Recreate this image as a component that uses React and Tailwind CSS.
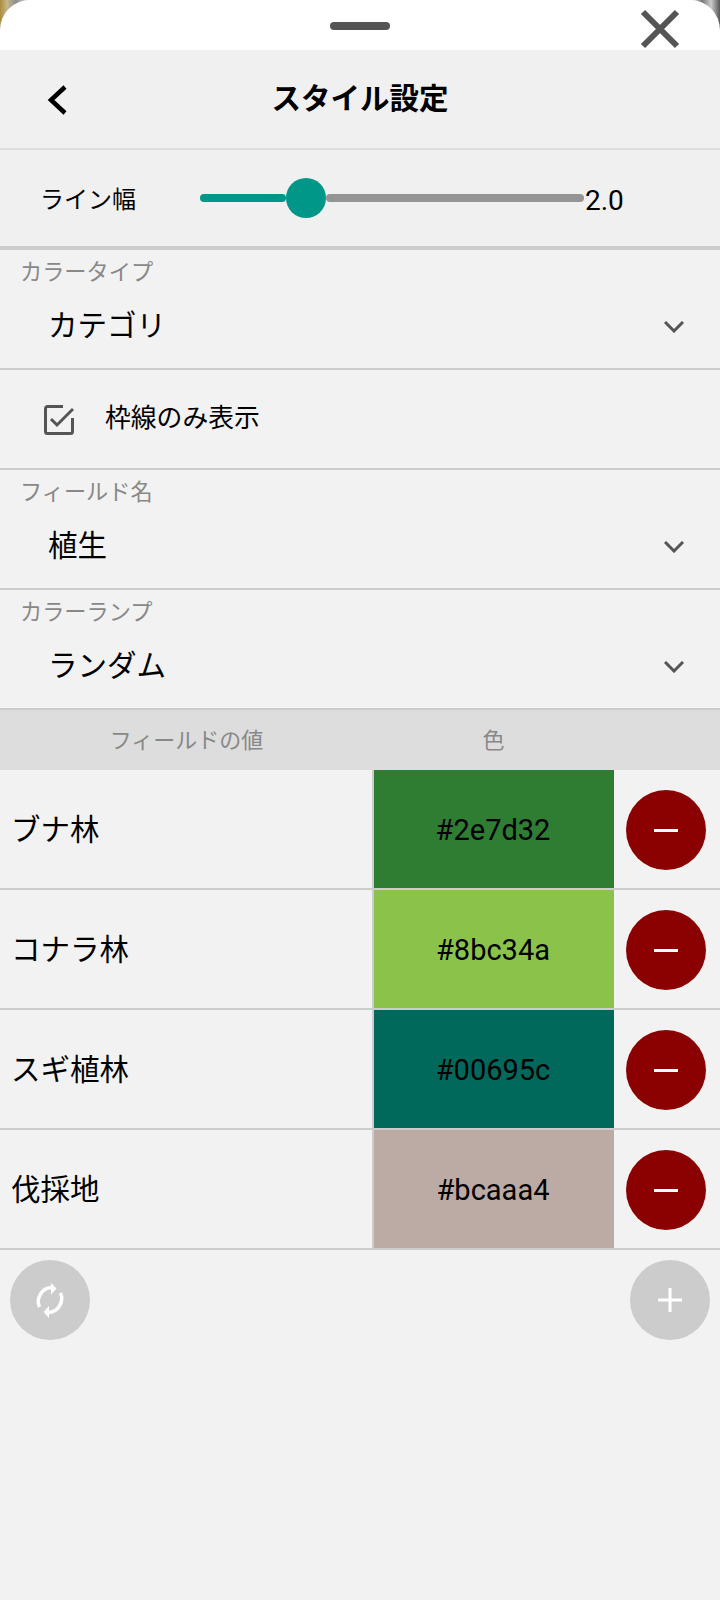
import React from "react";

const rows = [
  { name: "ブナ林", color: "#2e7d32", swatch: "bg-[#2e7d32]" },
  { name: "コナラ林", color: "#8bc34a", swatch: "bg-[#8bc34a]" },
  { name: "スギ植林", color: "#00695c", swatch: "bg-[#00695c]" },
  { name: "伐採地", color: "#bcaaa4", swatch: "bg-[#bcaaa4]" },
];

const ChevronDown = () => (
  <svg width="20" height="12" viewBox="0 0 20 12" fill="none" stroke="#555" strokeWidth="3">
    <path d="M1 1 L10 10 L19 1" />
  </svg>
);

const SelectField = ({ label, value, height = "h-[118px]" }) => (
  <div className={`${height} border-b-2 border-[#ccc] box-content flex flex-col`}>
    <div className="text-[22.2px] leading-[30px] text-[#888] pl-[20px] mt-[7px]">{label}</div>
    <div className="flex items-center justify-between pl-[48px] pr-[36px] mt-[22px]">
      <span className="text-[29.5px] leading-[34px] text-black">{value}</span>
      <span className="mt-[2px] flex"><ChevronDown /></span>
    </div>
  </div>
);

export default function App() {
  return (
    <div className="min-h-[1600px] bg-[#f2f2f2] font-['Roboto','Noto_Sans_CJK_JP',sans-serif] text-black">
      <div className="bg-[linear-gradient(90deg,#a98c3e_0px,#c7b68a_7px,#8d8d8d_16px,#c9c9c9_26px,#fff_32px,#fff_690px,#777_702px,#ccc_711px,#555_720px)]">
        <div className="relative h-[50px] bg-white rounded-t-[30px] flex justify-center pt-[22px]">
          <div className="w-[60px] h-2 rounded bg-[#555]"></div>
          <svg className="absolute left-[640px] top-[9px]" width="40" height="40" viewBox="0 0 40 40" fill="none" stroke="#555" strokeWidth="6">
            <path d="M3 3 L37 37 M37 3 L3 37" />
          </svg>
        </div>
      </div>

      {/* title */}
      <div className="relative h-[100px] bg-[#f0f0f0] border-b-2 border-[#ddd] flex items-center justify-center">
        <svg className="absolute left-[46px] top-[35px]" width="22" height="30" viewBox="0 0 22 30" fill="none" stroke="#000" strokeWidth="4.5">
          <path d="M19 2 L5 15 L19 28" />
        </svg>
        <span className="text-[29.5px] font-bold leading-none mt-[2px]">スタイル設定</span>
      </div>

      {/* line width */}
      <div className="h-[100px] bg-[#f0f0f0] border-b-4 border-[#ccc] flex items-center pl-[40px]">
        <span className="w-[160px] text-[24px] leading-none mt-[3px]">ライン幅</span>
        <div className="w-[384px] flex items-center">
          <div className="w-[86px] h-2 rounded-full bg-[#009688]"></div>
          <div className="w-10 h-10 rounded-full bg-[#009688]"></div>
          <div className="flex-1 h-2 rounded-full bg-[#949494]"></div>
        </div>
        <span className="ml-px text-[28px] leading-none mt-[5px]">2.0</span>
      </div>

      <SelectField label="カラータイプ" value="カテゴリ" />

      {/* outline only */}
      <div className="h-[98px] border-b-2 border-[#ccc] box-content flex items-center pl-[44px]">
        <svg width="30" height="30" viewBox="0 0 30 30" fill="none" stroke="#555" strokeWidth="3" className="mt-[1px]">
          <path d="M19 1.5 H3.5 A2 2 0 0 0 1.5 3.5 V26.5 A2 2 0 0 0 3.5 28.500 H26.500 A2 2 0 0 0 28.500 26.500 V13" />
          <path d="M7 14 L13 20 L29 4" />
        </svg>
        <span className="ml-[31px] text-[25.8px] leading-none">枠線のみ表示</span>
      </div>

      <SelectField label="フィールド名" value="植生" />
      <SelectField label="カラーランプ" value="ランダム" />

      {/* table head */}
      <div className="flex h-[60px] bg-[#ddd] text-[22px] text-[#888] items-center">
        <div className="w-[373px] text-center">フィールドの値</div>
        <div className="w-[241px] text-center">色</div>
      </div>

      {rows.map((row) => (
        <div key={row.name} className="flex h-[120px] border-b-2 border-[#ccc]">
          <div className="w-[374px] border-r-2 border-[#ccc] pl-[11px] pt-[3px] flex items-center text-[29.5px]">{row.name}</div>
          <div className={`w-[240px] pt-[3px] pr-[2px] flex items-center justify-center text-[29px] ${row.swatch}`}>{row.color}</div>
          <div className="flex-1 flex items-center pl-3 pt-[2px]">
            <button className="w-20 h-20 rounded-full bg-[#8b0000] flex items-center justify-center">
              <span className="w-[24px] h-[3px] bg-white"></span>
            </button>
          </div>
        </div>
      ))}

      {/* footer actions */}
      <div className="flex justify-between px-[10px] pt-[10px]">
        <button className="w-20 h-20 rounded-full bg-[#ccc] flex items-center justify-center">
          <svg width="80" height="80" viewBox="0 0 80 80" fill="none" stroke="#fff" strokeWidth="3.500">
            <path d="M29.500 47 A14 14 0 0 1 41 27.500" />
            <path d="M50.500 33 A14 14 0 0 1 39 52.500" />
            <polygon points="41,23 46.500,28.500 41,34.500" fill="#fff" stroke="none" />
            <polygon points="39,46 33.500,52 39,58" fill="#fff" stroke="none" />
          </svg>
        </button>
        <button className="w-20 h-20 rounded-full bg-[#ccc] flex items-center justify-center">
          <svg width="24" height="24" viewBox="0 0 24 24" fill="none" stroke="#fff" strokeWidth="3">
            <path d="M12 0 V24 M0 12 H24" />
          </svg>
        </button>
      </div>
    </div>
  );
}
